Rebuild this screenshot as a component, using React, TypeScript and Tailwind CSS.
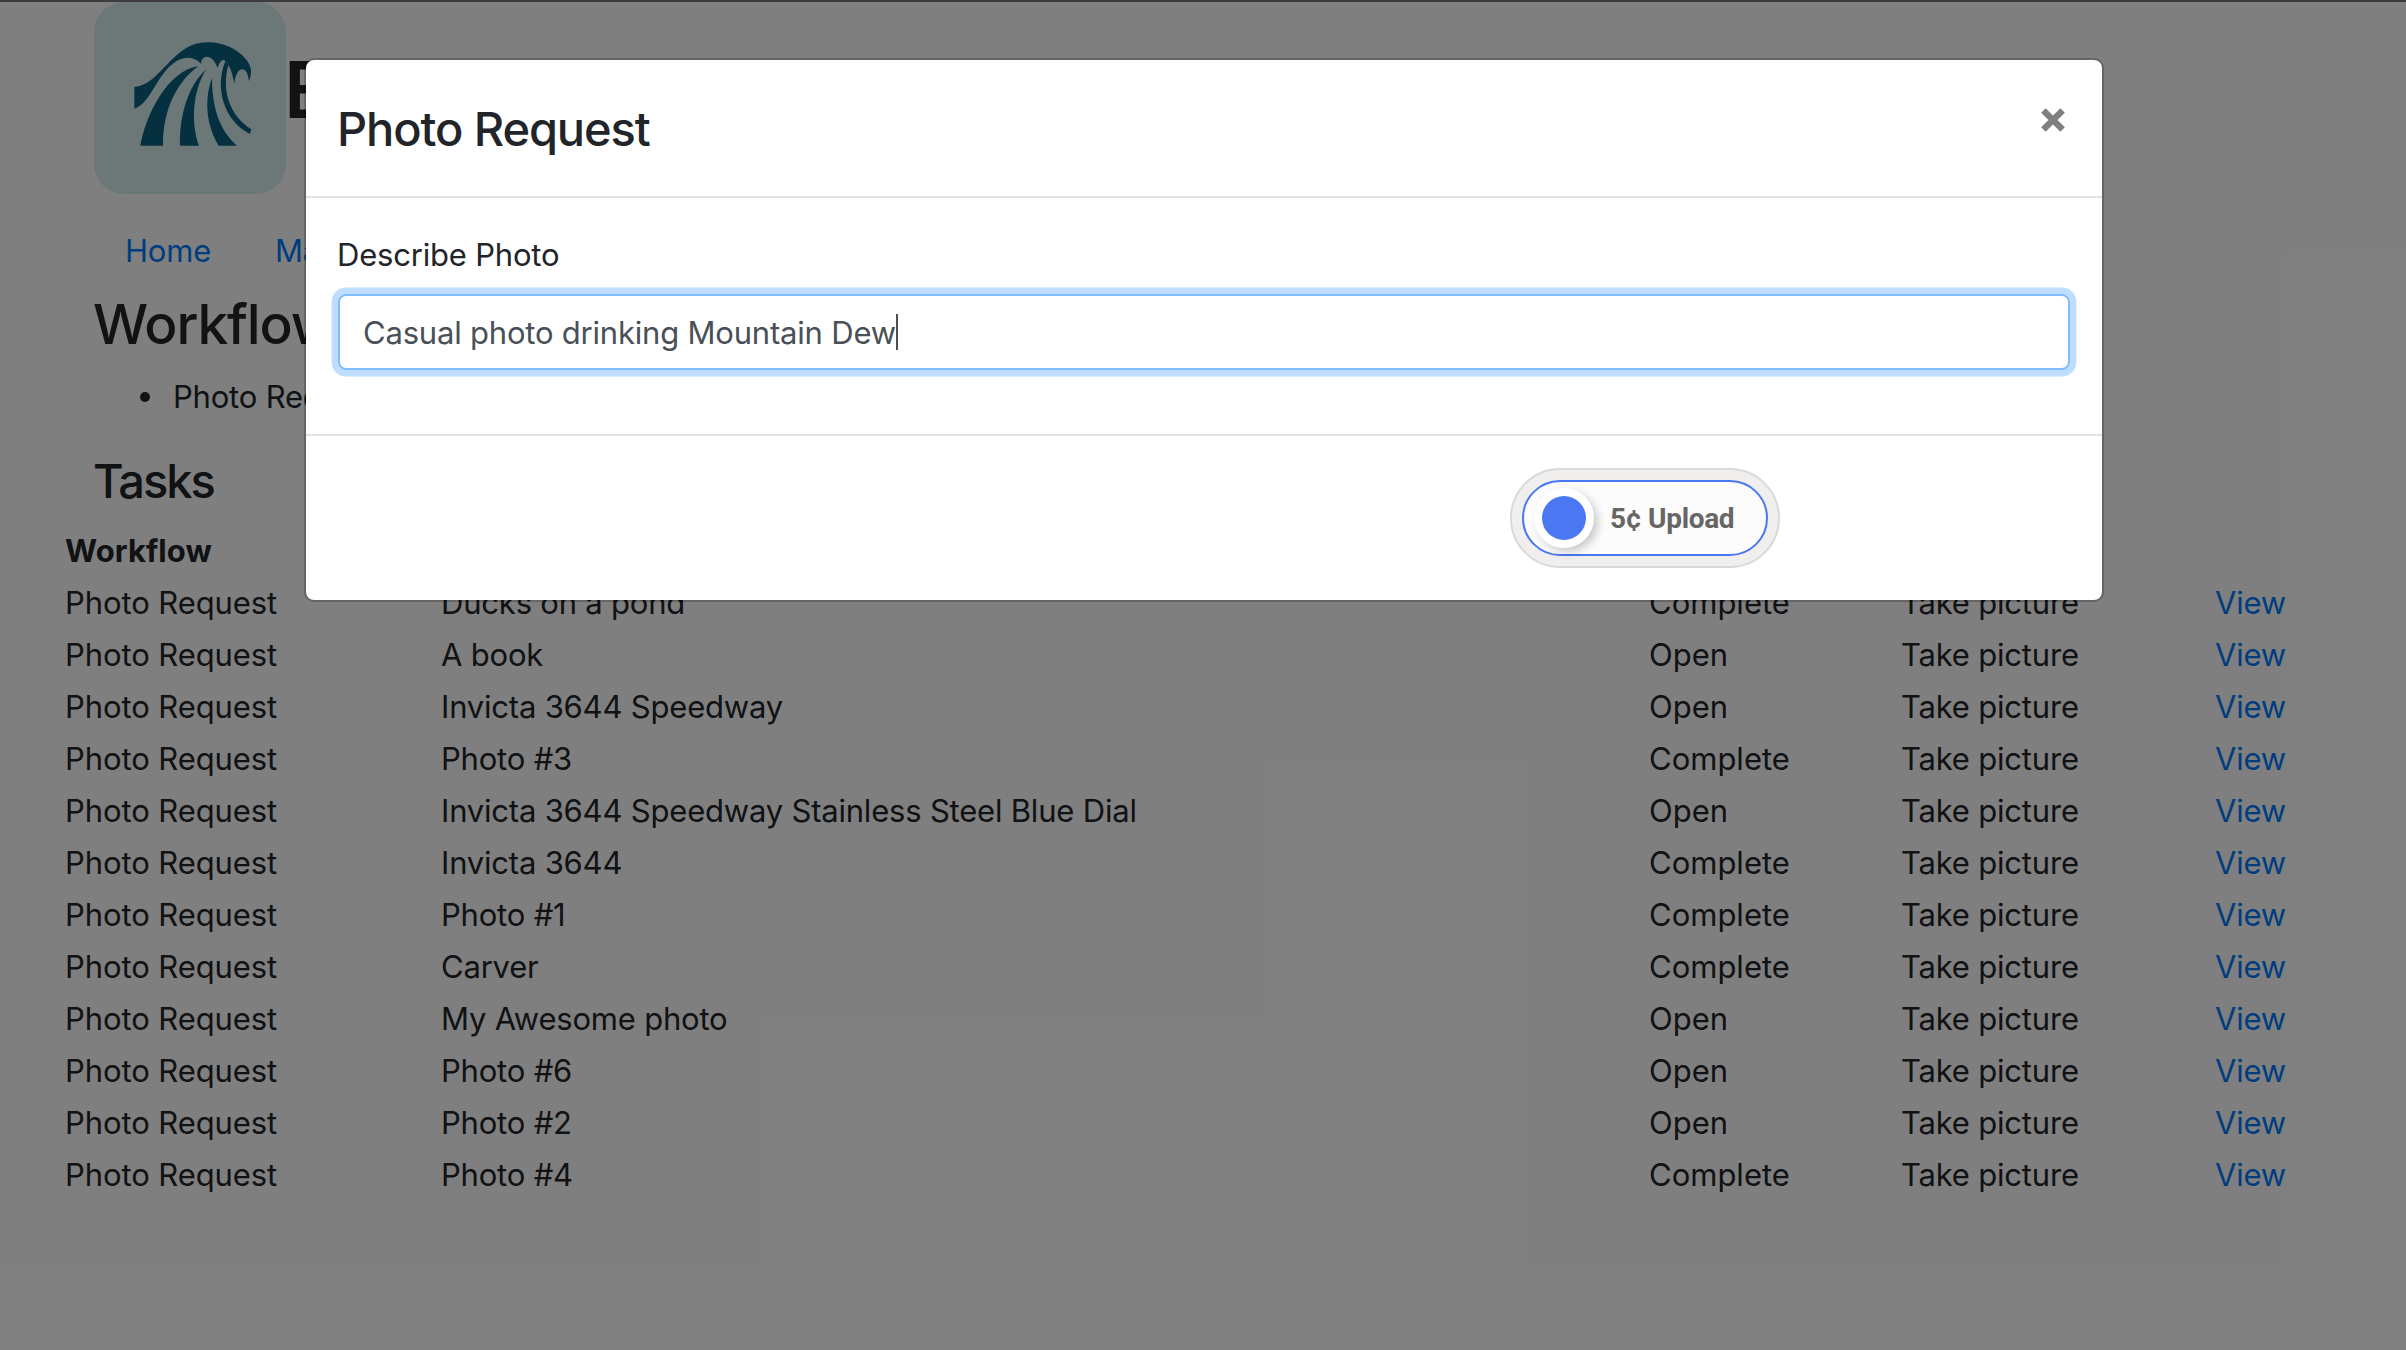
type Task = { name: string; status: 'Open' | 'Complete' };

const tasks: Task[] = [
  { name: 'Ducks on a pond', status: 'Complete' },
  { name: 'A book', status: 'Open' },
  { name: 'Invicta 3644 Speedway', status: 'Open' },
  { name: 'Photo #3', status: 'Complete' },
  { name: 'Invicta 3644 Speedway Stainless Steel Blue Dial', status: 'Open' },
  { name: 'Invicta 3644', status: 'Complete' },
  { name: 'Photo #1', status: 'Complete' },
  { name: 'Carver', status: 'Complete' },
  { name: 'My Awesome photo', status: 'Open' },
  { name: 'Photo #6', status: 'Open' },
  { name: 'Photo #2', status: 'Open' },
  { name: 'Photo #4', status: 'Complete' },
];

function WaveLogo() {
  return (
    <div className="h-48 w-48 shrink-0 overflow-hidden rounded-[30px] bg-[#d8eef0]">
      <svg viewBox="42 6 576 576" className="h-full w-full" fill="#08607e">
        <path d="M163 261C215 255 245 205 285 170C320 139 345 127 385 127C430 127 468 147 492 171C515 196 518 215 507 244C503 218 497 208 487 208C474 208 466 225 463 251C458 225 452 205 445 196L436 183C432 178 423 180 419 189L412 203C405 180 392 170 380 170C370 170 363 180 363 191C350 177 335 172 315 174C265 183 238 240 208 286C192 310 176 322 163 326Z" />
        <path d="M445 196C425 265 445 345 514 388L510 402C432 362 403 265 436 183Z" />
        <path d="M181 437C197 345 262 213 355 198C290 247 248 330 249 437Z" />
        <path d="M300 437C298 345 325 255 378 209C338 270 332 370 357 437Z" />
        <path d="M396 234C396 325 420 393 471 437L416 437C382 380 370 305 396 234Z" />
      </svg>
    </div>
  );
}

function TaskTable() {
  const row = 'grid h-[52px] grid-cols-[376px_1208px_252px_314px_1fr] pl-[65px] leading-[52px]';
  return (
    <div className="mt-[15px]">
      <div className={row + ' font-bold tracking-[0.05px]'}>
        <div>Workflow</div>
      </div>
      {tasks.map((t) => (
        <div key={t.name} className={row}>
          <div className="tracking-[-0.1px]">Photo Request</div>
          <div>{t.name}</div>
          <div className="tracking-normal">{t.status}</div>
          <div>Take picture</div>
          <a className="text-[#007bff]">View</a>
        </div>
      ))}
    </div>
  );
}

function UploadButton() {
  return (
    <div className="flex h-[100px] w-[270px] items-center justify-center rounded-full border-2 border-[#d9d9d9] bg-[#f0efee]">
      <button className="flex h-[76px] w-[246px] items-center rounded-full border-2 border-[#4b77f3] bg-[#fcfcfc] pl-[10px]">
        <span className="flex h-[60px] w-[60px] items-center justify-center rounded-full bg-white shadow-[4px_4px_8px_rgba(0,0,0,0.2)]">
          <span className="h-11 w-11 rounded-full bg-[#4b77f3]" />
        </span>
        <span className="ml-4 pt-0.5 font-['Roboto',sans-serif] text-[28px] leading-9 font-bold tracking-[-0.35px] whitespace-nowrap text-[#666]">
          5¢ Upload
        </span>
      </button>
    </div>
  );
}

function PhotoRequestModal() {
  return (
    <div className="absolute top-[58px] left-[304px] flex h-[544px] w-[1800px] flex-col rounded-[10px] border-2 border-black/20 bg-white bg-clip-padding text-[#212529]">
      <div className="flex h-[138px] items-start justify-between border-b-2 border-[#dee2e6] pt-10 pr-[37px] pl-[31px]">
        <h4 className="text-[47px] leading-[58px] font-medium tracking-[-1.1px]">Photo Request</h4>
        <button aria-label="Close" className="mt-2">
          <svg viewBox="0 0 24 24" className="h-6 w-6" stroke="#808080" strokeWidth="6.4">
            <path d="M2.4 2.4L21.6 21.6M21.6 2.4L2.4 21.6" />
          </svg>
        </button>
      </div>
      <div className="h-[238px] border-b-2 border-[#dee2e6] px-8 pt-[33px]">
        <div className="-ml-px h-[63px] leading-[48px]">Describe Photo</div>
        <div className="flex h-[76px] w-[1732px] items-center rounded-lg border-2 border-[#80bdff] pl-[23px] text-[#495057] shadow-[0_0_0_6.4px_rgba(0,123,255,0.25)]">
          <span className="pt-0.5 leading-[48px]">Casual photo drinking Mountain Dew</span>
          <span className="h-9 w-0.5 bg-[#495057]" />
        </div>
      </div>
      <div className="flex pt-8 pl-[1204px]">
        <UploadButton />
      </div>
    </div>
  );
}

export default function App() {
  return (
    <div className="relative h-[1350px] w-[2406px] overflow-hidden bg-white font-['Inter',sans-serif] text-[31px] tracking-[-0.2px] text-[#212529]">
      <div className="pt-0.5">
        <div className="flex h-48 pl-[94px]">
          <WaveLogo />
          <h1 className="mt-10 -ml-0.5 text-[78px] leading-[96px] font-semibold">E</h1>
        </div>
        <nav className="flex gap-16 pt-[33px] pl-[125px] leading-[48px] text-[#007bff]">
          <a>Home</a>
          <a>Ma</a>
        </nav>
        <h3 className="mt-4 pl-[93px] text-[55px] leading-[67px] font-medium tracking-[-1.1px]">Workflows</h3>
        <ul className="mt-[15px] pl-[140px] leading-[48px]">
          <li className="flex items-center">
            <span className="mr-[23px] h-2.5 w-2.5 rounded-full bg-[#212529]" />
            Photo Request
          </li>
        </ul>
        <h4 className="mt-[31px] pl-[93px] text-[47px] leading-[58px] font-medium tracking-[-2px]">Tasks</h4>
        <TaskTable />
      </div>
      <div className="absolute inset-0 bg-black/50" />
      <div className="absolute inset-x-0 top-0 h-0.5 bg-[#3c3c3c]" />
      <PhotoRequestModal />
    </div>
  );
}
